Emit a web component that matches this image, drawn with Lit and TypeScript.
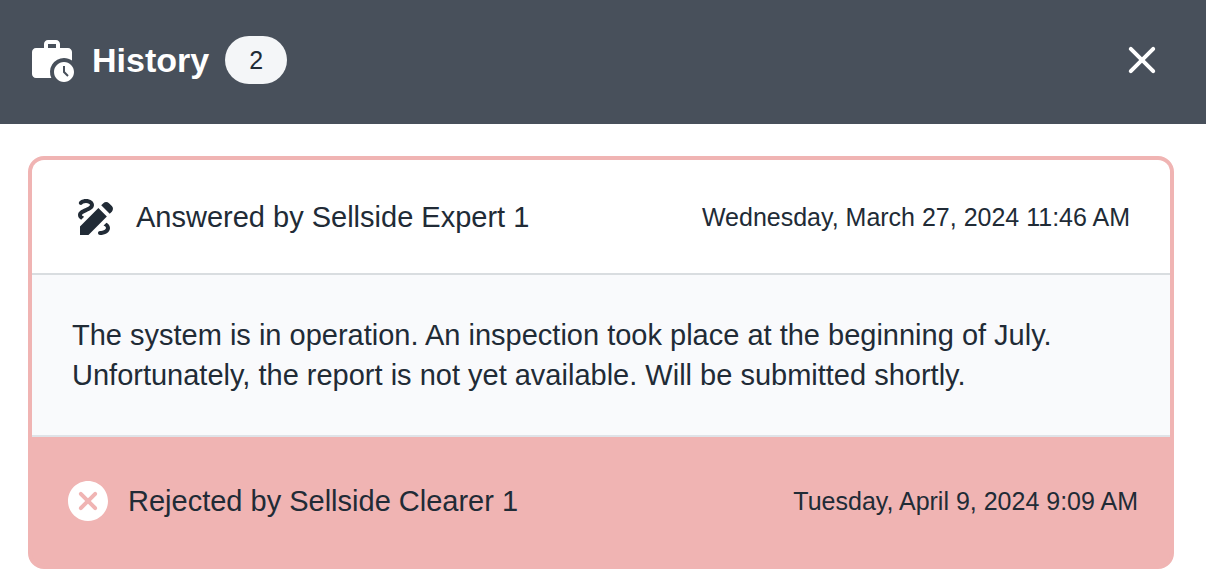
import { LitElement, html, css } from "lit";
import { customElement, property } from "lit/decorators.js";

type Status = "answered" | "rejected";

interface Entry {
  status: Status;
  title: string;
  date: string;
  datetime: string;
  message?: string[];
}

const icons = {
  history: html`<svg viewBox="0 0 24 24" aria-hidden="true">
    <path d="M18 11c1.49 0 2.87.47 4 1.26V8c0-1.11-.89-2-2-2h-4V4c0-1.11-.89-2-2-2h-4c-1.11 0-2 .89-2 2v2H4c-1.11 0-1.99.89-1.99 2L2 19c0 1.11.89 2 2 2h7.68A6.995 6.995 0 0 1 18 11zm-8-7h4v2h-4V4z" />
    <path d="M18 13c-2.76 0-5 2.24-5 5s2.24 5 5 5 5-2.24 5-5-2.24-5-5-5zm1.65 7.35L17.5 18.2V15h1v2.79l1.85 1.85-.7.71z" />
  </svg>`,
  close: html`<svg viewBox="0 0 24 24" aria-hidden="true">
    <path d="M18.3 5.71c-.39-.39-1.02-.39-1.41 0L12 10.59 7.11 5.7c-.39-.39-1.02-.39-1.41 0-.39.39-.39 1.02 0 1.41L10.59 12 5.7 16.89c-.39.39-.39 1.02 0 1.41.39.39 1.02.39 1.41 0L12 13.41l4.89 4.89c.39.39 1.02.39 1.41 0 .39-.39.39-1.02 0-1.41L13.41 12l4.89-4.89c.38-.38.38-1.02 0-1.4z" />
  </svg>`,
  answered: html`<svg viewBox="0 0 24 24" aria-hidden="true">
    <path d="M18.85 10.39l1.06-1.06c.78-.78.78-2.05 0-2.83L18.5 5.09c-.78-.78-2.05-.78-2.83 0l-1.06 1.06 4.24 4.24zm-5.66-2.83L4 16.76V21h4.24l9.19-9.19-4.24-4.25zM19 17.5c0 2.19-2.54 3.5-5 3.5-.55 0-1-.45-1-1s.45-1 1-1c1.54 0 3-.73 3-1.5 0-.47-.48-.87-1.23-1.2l1.48-1.48c1.07.63 1.75 1.47 1.75 2.68zM4.58 13.35C3.61 12.79 3 12.06 3 11c0-1.8 1.89-2.63 3.56-3.36C7.59 7.18 9 6.56 9 6c0-.41-.78-1-2-1-1.26 0-1.8.61-1.83.64-.35.41-.98.46-1.4.12-.41-.34-.49-.95-.15-1.38C3.73 4.24 4.76 3 7 3s4 1.32 4 3c0 1.87-1.93 2.72-3.64 3.47C6.42 9.88 5 10.5 5 11c0 .31.43.6 1.07.86l-1.49 1.49z" />
  </svg>`,
  rejected: html`<svg viewBox="0 0 24 24" aria-hidden="true">
    <path d="M12 2C6.47 2 2 6.47 2 12s4.47 10 10 10 10-4.47 10-10S17.53 2 12 2zm4.3 14.3c-.39.39-1.02.39-1.41 0L12 13.41 9.11 16.3c-.39.39-1.02.39-1.41 0-.39-.39-.39-1.02 0-1.41L10.59 12 7.7 9.11c-.39-.39-.39-1.02 0-1.41.39-.39 1.02-.39 1.41 0L12 10.59l2.89-2.89c.39-.39 1.02-.39 1.41 0 .39.39.39 1.02 0 1.41L13.41 12l2.89 2.89c.38.38.38 1.02 0 1.41z" />
  </svg>`,
};

@customElement("history-entry")
export class HistoryEntry extends LitElement {
  @property({ attribute: false }) entry!: Entry;

  static styles = css`
    :host {
      display: block;
    }
    .row {
      display: flex;
      align-items: center;
      gap: 16px;
    }
    .answered {
      padding: 33px 40px 32px;
      border-radius: 12px 12px 0 0;
      background: #fff;
    }
    .rejected {
      padding: 40px 32px;
    }
    svg {
      display: block;
      flex: none;
      width: 48px;
      height: 48px;
      fill: #212b36;
    }
    .rejected svg {
      fill: #fff;
    }
    .title {
      flex: 1;
      margin: 0;
      font-size: 29px;
      font-weight: 400;
      line-height: 40px;
    }
    .date {
      font-size: 25px;
      line-height: 40px;
    }
    .message {
      padding: 40px;
      border-top: 2px solid #d9dde0;
      border-bottom: 2px solid #dfe3e8;
      background: #f9fafc;
      font-size: 29px;
      line-height: 40px;
    }
    .line {
      display: block;
    }
  `;

  render() {
    const { status, title, date, datetime, message } = this.entry;
    return html`
      <article>
        <header class="row ${status}">
          ${icons[status]}
          <h2 class="title">${title}</h2>
          <time class="date" datetime=${datetime}>${date}</time>
        </header>
        ${message
          ? html`<div class="message">
              ${message.map((line) => html`<span class="line">${line}</span>`)}
            </div>`
          : null}
      </article>
    `;
  }
}

@customElement("app-root")
export class AppRoot extends LitElement {
  private entries: Entry[] = [
    {
      status: "answered",
      title: "Answered by Sellside Expert 1",
      date: "Wednesday, March 27, 2024 11:46 AM",
      datetime: "2024-03-27T11:46",
      message: [
        "The system is in operation. An inspection took place at the beginning of July.",
        "Unfortunately, the report is not yet available. Will be submitted shortly.",
      ],
    },
    {
      status: "rejected",
      title: "Rejected by Sellside Clearer 1",
      date: "Tuesday, April 9, 2024 9:09 AM",
      datetime: "2024-04-09T09:09",
    },
  ];

  static styles = css`
    :host {
      display: block;
      background: #fff;
      color: #212b36;
      font-family: "Liberation Sans", Arial, sans-serif;
    }
    .bar {
      display: flex;
      align-items: center;
      gap: 16px;
      padding: 36px 40px 40px 28px;
      background: #48505b;
      color: #fff;
    }
    svg {
      display: block;
      flex: none;
      width: 48px;
      height: 48px;
      fill: currentColor;
    }
    .heading {
      margin: 0;
      font-size: 34px;
      font-weight: 700;
      line-height: 48px;
    }
    .count {
      padding: 0 24px;
      border-radius: 24px;
      background: #f4f6f8;
      color: #212b36;
      font-size: 25px;
      line-height: 48px;
    }
    .close {
      margin-left: auto;
      padding: 0;
      border: 0;
      background: none;
      color: inherit;
      cursor: pointer;
    }
    .card {
      margin: 32px 32px 15px 28px;
      border: 4px solid #f0b4b3;
      border-radius: 16px;
      background: #f0b4b3;
    }
  `;

  render() {
    return html`
      <header class="bar">
        ${icons.history}
        <h1 class="heading">History</h1>
        <span class="count">${this.entries.length}</span>
        <button class="close" type="button" aria-label="Close">${icons.close}</button>
      </header>
      <main class="card">
        ${this.entries.map((entry) => html`<history-entry .entry=${entry}></history-entry>`)}
      </main>
    `;
  }
}
